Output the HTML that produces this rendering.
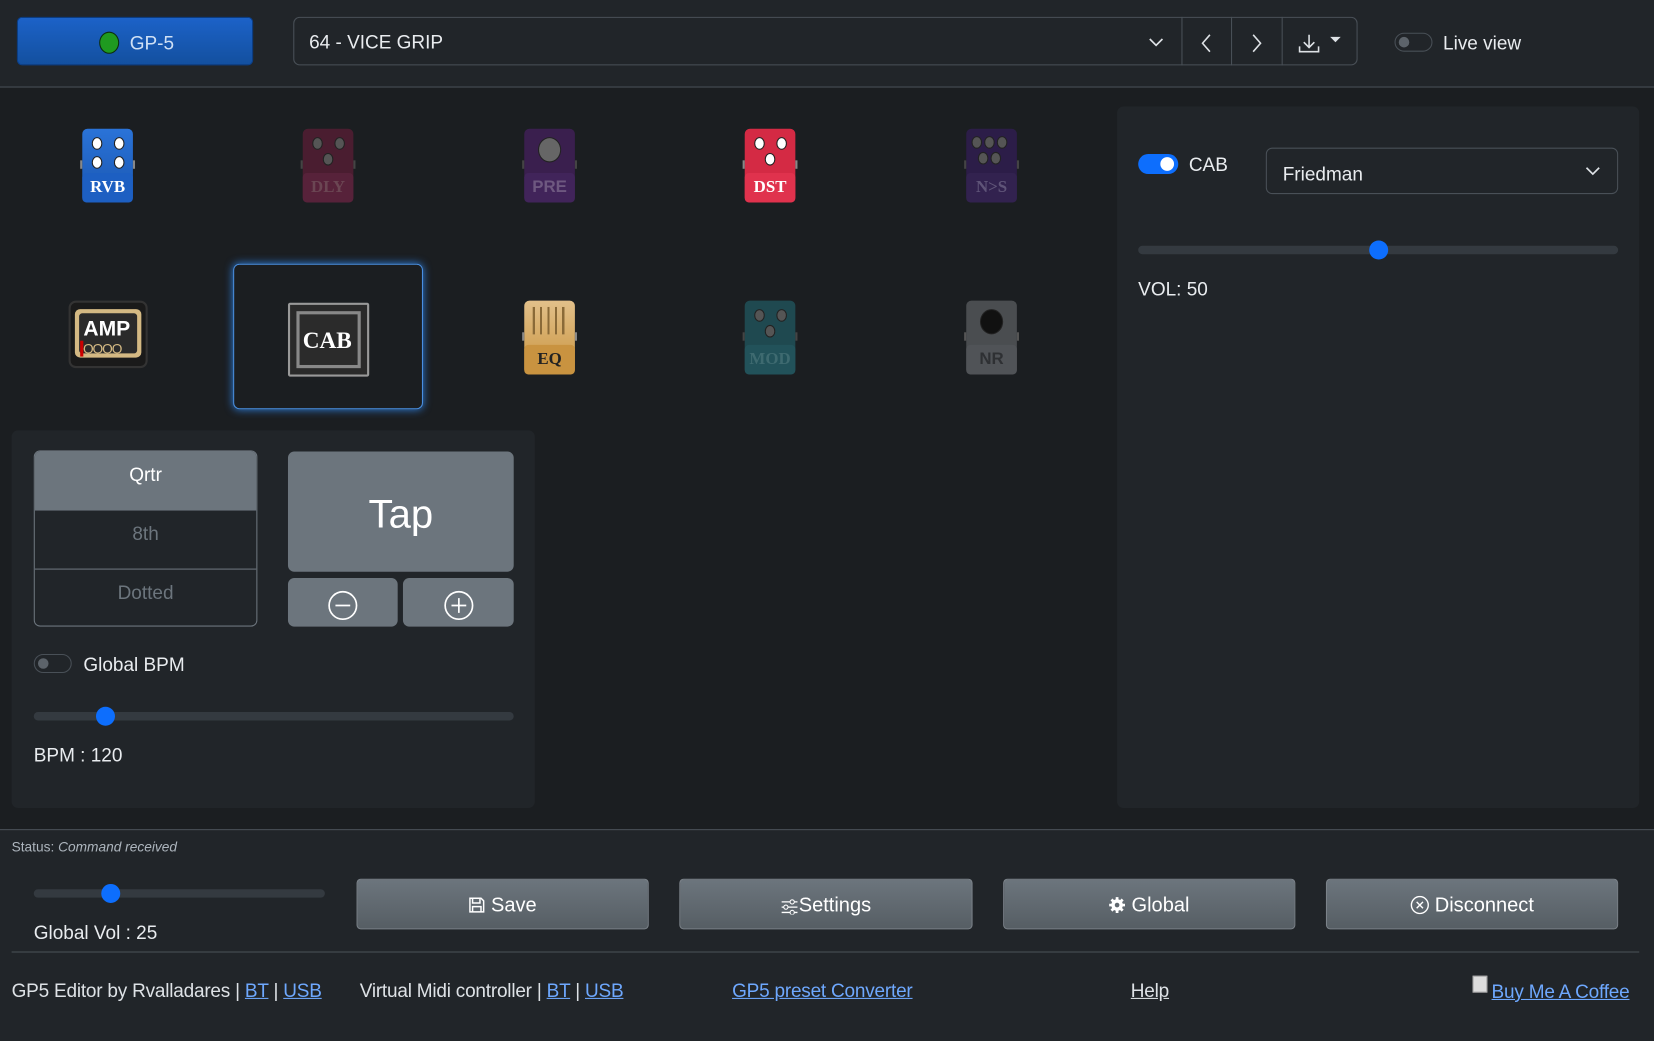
<!DOCTYPE html>
<html><head><meta charset="utf-8"><style>
html,body{margin:0;padding:0;width:1654px;height:1040px;overflow:hidden;background:#1b1e21}
#s{position:absolute;left:0;top:0;width:1568px;height:986px;transform:scale(1.05485);transform-origin:0 0;font-family:"Liberation Sans",sans-serif;color:#dee2e6;background:#1b1e21}
.a{position:absolute}
.t{position:absolute;white-space:nowrap;line-height:1}
.ped{position:absolute;width:48px;height:70px;border-radius:5px}
.ped .lab{position:absolute;left:0;right:0;bottom:0;height:28px;border-radius:4px;font-family:"Liberation Serif",serif;font-weight:bold;font-size:16px;text-align:center;line-height:28px}
.ped .k{position:absolute;width:8px;height:10px;border-radius:50%;background:#fff;border:1px solid #222}
.ped .ear{position:absolute;top:30px;width:52px;left:-2px;height:8px;border-left:2px solid #888;border-right:2px solid #888;box-sizing:border-box}
.tog{position:absolute;width:36px;height:18px;border:1px solid #495057;border-radius:10px;box-sizing:border-box}
.tog:after{content:"";position:absolute;left:3px;top:3px;width:10px;height:10px;border-radius:50%;background:#5c636a}
.trk{position:absolute;height:8px;border-radius:4px;background:#343a40}
.th{position:absolute;width:18px;height:18px;border-radius:50%;background:#0d6efd;top:-5px}
.btn{position:absolute;top:833px;height:48px;border:1px solid #7b8289;border-radius:4px;box-sizing:border-box;background:linear-gradient(#6c757d,#565e64);color:#fff;font-size:19px;text-align:center;line-height:50px}
a{color:#6ea8fe;text-decoration:underline}
.ft{letter-spacing:-0.2px}
</style></head><body><div id="s">
<div class="a" style="left:0;top:0;width:1568px;height:82px;background:#212529;border-bottom:1px solid #495057"></div>
<div class="a" style="left:16px;top:16px;width:224px;height:46px;border-radius:5px;background:linear-gradient(#1c62c8,#13509f);border:1px solid #0a3f8a;box-sizing:border-box"></div>
<div class="a" style="left:94px;top:30px;width:19px;height:21px;border-radius:50%;background:#1f9a20;border:1px solid #0c2e0c;box-sizing:border-box"></div>
<div class="t" style="left:123px;top:32px;font-size:18px;color:#cfe0f5">GP-5</div>
<div class="a" style="left:278px;top:16px;width:1009px;height:46px;border:1px solid #495057;border-radius:6px;box-sizing:border-box"></div>
<div class="t" style="left:293px;top:31px;font-size:18px;color:#e9ecef">64 - VICE GRIP</div>
<svg class="a" style="left:1088px;top:34px" width="16" height="12"><path d="M2 3 L8 9 L14 3" stroke="#dee2e6" stroke-width="1.6" fill="none"/></svg>
<div class="a" style="left:1120px;top:16px;width:1px;height:46px;background:#495057"></div>
<div class="a" style="left:1167px;top:16px;width:1px;height:46px;background:#495057"></div>
<div class="a" style="left:1215px;top:16px;width:1px;height:46px;background:#495057"></div>
<svg class="a" style="left:1137px;top:31px" width="14" height="20"><path d="M10 2 L3 10 L10 18" stroke="#dee2e6" stroke-width="1.5" fill="none"/></svg>
<svg class="a" style="left:1184px;top:31px" width="14" height="20"><path d="M4 2 L11 10 L4 18" stroke="#dee2e6" stroke-width="1.5" fill="none"/></svg>
<svg class="a" style="left:1229px;top:30px" width="46" height="22"><path d="M12 3 V15 M7 10 L12 15 L17 10 M3 14 V19 H21 V14" stroke="#dee2e6" stroke-width="1.5" fill="none"/><path d="M32 5 H42 L37 10Z" fill="#dee2e6"/></svg>
<div class="tog" style="left:1322px;top:31px"></div>
<div class="t" style="left:1368px;top:32px;font-size:18px;color:#e9ecef">Live view</div>

<div class="ped" style="left:78px;top:122px;background:linear-gradient(#2a73d8,#1a56b0)"><div class="ear"></div><span class="k" style="left:9px;top:8px"></span><span class="k" style="left:30px;top:8px"></span><span class="k" style="left:9px;top:26px"></span><span class="k" style="left:30px;top:26px"></span><div class="lab" style="background:#1d5fc2;color:#fff">RVB</div></div>
<div class="ped" style="left:287px;top:122px;background:#4a1d30"><div class="ear" style="border-color:#444"></div><span class="k" style="left:9px;top:8px;background:#555"></span><span class="k" style="left:30px;top:8px;background:#555"></span><span class="k" style="left:19px;top:23px;background:#555"></span><div class="lab" style="background:#57223a;color:#6b4653">DLY</div></div>
<div class="ped" style="left:497px;top:122px;background:#3a1f4e"><div class="ear" style="border-color:#444"></div><span class="k" style="left:13px;top:8px;width:20px;height:22px;background:#666"></span><div class="lab" style="background:#41245a;color:#6e5880;font-family:'Liberation Sans',sans-serif">PRE</div></div>
<div class="ped" style="left:706px;top:122px;background:#d42a44"><div class="ear"></div><span class="k" style="left:9px;top:8px"></span><span class="k" style="left:30px;top:8px"></span><span class="k" style="left:19px;top:23px"></span><div class="lab" style="background:#e0324d;color:#fff">DST</div></div>
<div class="ped" style="left:916px;top:122px;background:#2c1d48"><div class="ear" style="border-color:#444"></div><span class="k" style="left:5px;top:7px;background:#555"></span><span class="k" style="left:17px;top:7px;background:#555"></span><span class="k" style="left:29px;top:7px;background:#555"></span><span class="k" style="left:11px;top:22px;background:#555"></span><span class="k" style="left:23px;top:22px;background:#555"></span><div class="lab" style="background:#32224f;color:#5f5478">N&gt;S</div></div>
<div class="a" style="left:221px;top:250px;width:180px;height:138px;border:1px solid #4a90e2;border-radius:6px;box-sizing:border-box;box-shadow:0 0 8px #2d7fe0"></div>
<div class="a" style="left:65px;top:285px;width:75px;height:64px;border-radius:7px;background:#1a1a1a;border:2px solid #333;box-sizing:border-box"></div>
<div class="a" style="left:71px;top:293px;width:63px;height:46px;border-radius:5px;background:#d4b983"></div>
<div class="a" style="left:75px;top:297px;width:55px;height:38px;border-radius:3px;background:#2a2a2a"></div>
<div class="t" style="left:79px;top:302px;font-size:20px;font-weight:bold;color:#fff">AMP</div>
<div class="t" style="left:76px;top:324px;font-size:13px;color:#d4b983;letter-spacing:-1px"><span style="background:#c00;color:#c00">.</span>OOOO</div>
<div class="a" style="left:273px;top:287px;width:77px;height:70px;background:#2a2a2a;border:2px solid #999;box-sizing:border-box;border-radius:2px"></div>
<div class="a" style="left:281px;top:295px;width:61px;height:54px;border:3px solid #888;box-sizing:border-box;background:#2b2b2b"></div>
<div class="t" style="left:287px;top:312px;font-family:'Liberation Serif',serif;font-weight:bold;font-size:22px;color:#fff">CAB</div>
<div class="ped" style="left:497px;top:285px;background:linear-gradient(#e2c08a,#c9943e)"><div class="ear"></div><div class="a" style="left:8px;top:6px;width:32px;height:26px;background:repeating-linear-gradient(90deg,#8a6a38 0 2px,transparent 2px 7px)"></div><div class="lab" style="background:#c99340;color:#222">EQ</div></div>
<div class="ped" style="left:706px;top:285px;background:#1f4950"><div class="ear" style="border-color:#444"></div><span class="k" style="left:9px;top:8px;background:#555"></span><span class="k" style="left:30px;top:8px;background:#555"></span><span class="k" style="left:19px;top:23px;background:#555"></span><div class="lab" style="background:#22525a;color:#3e6a70">MOD</div></div>
<div class="ped" style="left:916px;top:285px;background:#4a4d50"><div class="ear" style="border-color:#555"></div><span class="k" style="left:13px;top:8px;width:20px;height:22px;background:#111"></span><div class="lab" style="background:#505357;color:#2e3033;font-family:'Liberation Sans',sans-serif">NR</div></div>

<div class="a" style="left:11px;top:408px;width:496px;height:358px;background:#212529;border-radius:6px"></div>
<div class="a" style="left:32px;top:427px;width:212px;height:167px;border:1px solid #6c757d;border-radius:6px;box-sizing:border-box;overflow:hidden">
<div style="height:56px;background:#6c757d;color:#fff;font-size:18px;text-align:center;line-height:44px">Qrtr</div>
<div style="height:55px;border-bottom:1px solid #6c757d;color:#6c757d;font-size:18px;text-align:center;line-height:44px">8th</div>
<div style="height:55px;color:#6c757d;font-size:18px;text-align:center;line-height:44px">Dotted</div></div>
<div class="a" style="left:273px;top:428px;width:214px;height:114px;background:#6c757d;border-radius:6px;color:#fff;font-size:38px;text-align:center;line-height:120px">Tap</div>
<div class="a" style="left:273px;top:548px;width:104px;height:46px;background:#6c757d;border-radius:6px"></div>
<div class="a" style="left:382px;top:548px;width:105px;height:46px;background:#6c757d;border-radius:6px"></div>
<svg class="a" style="left:310px;top:559px" width="30" height="30"><circle cx="15" cy="15" r="13" stroke="#fff" stroke-width="1.6" fill="none"/><path d="M8 15 H22" stroke="#fff" stroke-width="1.6"/></svg>
<svg class="a" style="left:420px;top:559px" width="30" height="30"><circle cx="15" cy="15" r="13" stroke="#fff" stroke-width="1.6" fill="none"/><path d="M8 15 H22 M15 8 V22" stroke="#fff" stroke-width="1.6"/></svg>
<div class="tog" style="left:32px;top:620px"></div>
<div class="t" style="left:79px;top:621px;font-size:18px;color:#e9ecef">Global BPM</div>
<div class="trk" style="left:32px;top:675px;width:455px"><div class="th" style="left:59px"></div></div>
<div class="t" style="left:32px;top:707px;font-size:18px;color:#e9ecef">BPM : 120</div>

<div class="a" style="left:1059px;top:101px;width:495px;height:665px;background:#212529;border-radius:6px"></div>
<div class="a" style="left:1079px;top:146px;width:38px;height:19px;border-radius:10px;background:#0d6efd"><div class="a" style="left:21px;top:3px;width:13px;height:13px;border-radius:50%;background:#fff"></div></div>
<div class="t" style="left:1127px;top:147px;font-size:18px;color:#e9ecef">CAB</div>
<div class="a" style="left:1200px;top:140px;width:334px;height:44px;border:1px solid #495057;border-radius:6px;box-sizing:border-box"></div>
<div class="t" style="left:1216px;top:156px;font-size:18px;color:#e9ecef">Friedman</div>
<svg class="a" style="left:1502px;top:156px" width="16" height="12"><path d="M2 3 L8 9 L14 3" stroke="#dee2e6" stroke-width="1.6" fill="none"/></svg>
<div class="trk" style="left:1079px;top:233px;width:455px"><div class="th" style="left:219px"></div></div>
<div class="t" style="left:1079px;top:265px;font-size:18px;color:#e9ecef">VOL: 50</div>

<div class="a" style="left:0;top:786px;width:1568px;height:200px;background:#212529;border-top:1px solid #495057"></div>
<div class="t" style="left:11px;top:796px;font-size:13px;color:#adb5bd">Status: <i>Command received</i></div>
<div class="trk" style="left:32px;top:843px;width:276px"><div class="th" style="left:64px"></div></div>
<div class="t" style="left:32px;top:875px;font-size:18px;color:#e9ecef">Global Vol : 25</div>
<div class="btn" style="left:338px;width:277px"><svg width="16" height="16" style="vertical-align:-2px"><path d="M1.5 1.5 H12 L14.5 4 V14.5 H1.5Z M4 1.5 V6 H11 V1.5 M4 14.5 V9.5 H12 V14.5" stroke="#fff" stroke-width="1.4" fill="none"/></svg> Save</div>
<div class="btn" style="left:644px;width:278px"><svg width="17" height="16" style="vertical-align:-3px"><path d="M1 4 H16 M1 9 H16 M1 14 H16" stroke="#fff" stroke-width="1.2"/><circle cx="11" cy="4" r="2" fill="#5f676e" stroke="#fff"/><circle cx="5" cy="9" r="2" fill="#5f676e" stroke="#fff"/><circle cx="11" cy="14" r="2" fill="#5f676e" stroke="#fff"/></svg>Settings</div>
<div class="btn" style="left:951px;width:277px"><svg width="16" height="16" style="vertical-align:-2px"><circle cx="8" cy="8" r="5.5" fill="#fff"/><path d="M8 0.5 V15.5 M0.5 8 H15.5 M2.7 2.7 L13.3 13.3 M13.3 2.7 L2.7 13.3" stroke="#fff" stroke-width="2.6"/><circle cx="8" cy="8" r="2.2" fill="#5f676e"/></svg> Global</div>
<div class="btn" style="left:1257px;width:277px"><svg width="18" height="18" style="vertical-align:-3px"><circle cx="9" cy="9" r="8" stroke="#fff" stroke-width="1.3" fill="none"/><path d="M6 6 L12 12 M12 6 L6 12" stroke="#fff" stroke-width="1.3"/></svg> Disconnect</div>
<div class="a" style="left:11px;top:902px;width:1543px;height:1px;background:#495057"></div>
<div class="t ft" style="left:11px;top:930px;font-size:18px;color:#dee2e6">GP5 Editor by Rvalladares | <a>BT</a> | <a>USB</a></div>
<div class="t ft" style="left:341px;top:930px;font-size:18px;color:#dee2e6">Virtual Midi controller | <a>BT</a> | <a>USB</a></div>
<div class="t ft" style="left:694px;top:930px;font-size:18px"><a>GP5 preset Converter</a></div>
<div class="t ft" style="left:1072px;top:930px;font-size:18px"><a style="color:#dee2e6">Help</a></div>
<div class="a" style="left:1396px;top:925px;width:14px;height:16px;border:1px solid #aaa;background:#ddd;box-sizing:border-box"></div>
<div class="t ft" style="left:1414px;top:931px;font-size:18px"><a>Buy Me A Coffee</a></div>
</div></body></html>
